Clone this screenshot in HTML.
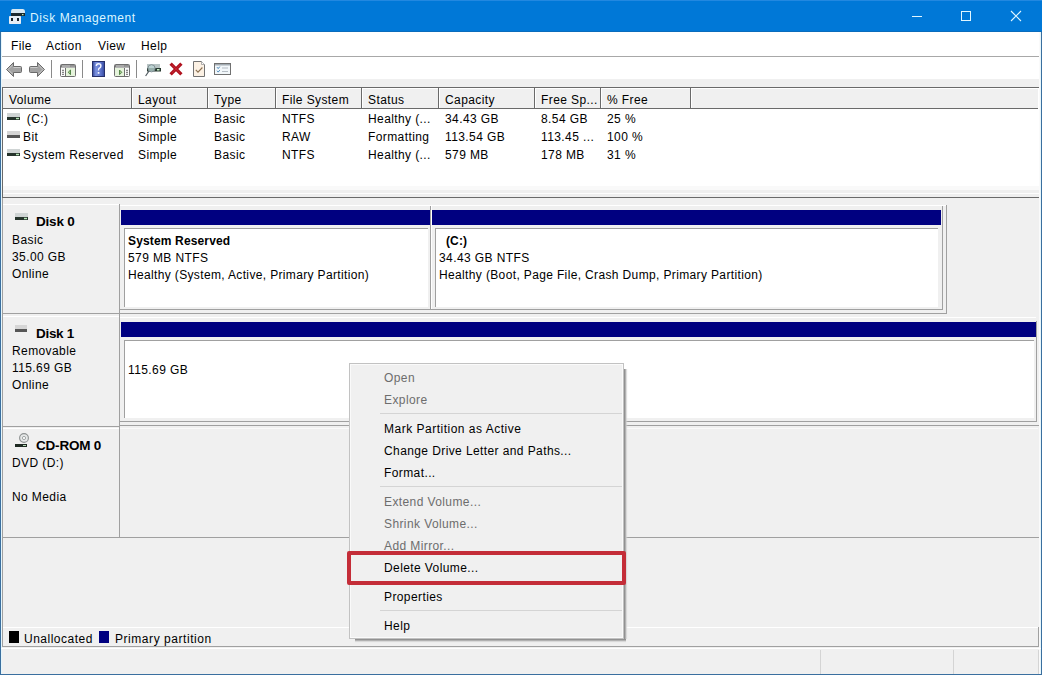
<!DOCTYPE html>
<html><head><meta charset="utf-8">
<style>
*{margin:0;padding:0;box-sizing:border-box}
html,body{width:1042px;height:675px;overflow:hidden;background:#f0f0f0}
body{position:relative;font-family:"Liberation Sans",sans-serif;font-size:12px;color:#000}
.a{position:absolute}
.t{position:absolute;white-space:pre;line-height:12px;font-size:12px;letter-spacing:0.4px;color:#000}
.b{font-weight:bold;letter-spacing:0.15px;color:#000}
.g{color:#6d6d6d}
.hl{position:absolute;height:1px}
.vl{position:absolute;width:1px}
svg{position:absolute;overflow:visible}
</style></head><body>
<!-- ========== title bar ========== -->
<div class="a" style="left:0;top:0;width:1042px;height:32px;background:#0078d7"></div>
<div class="hl" style="left:0;top:0;width:1042px;background:#2288e0"></div>
<div class="hl" style="left:0;top:31px;width:1042px;background:#0a6cbc"></div>
<svg style="left:9px;top:9px" width="16" height="15" viewBox="0 0 16 15">
  <path d="M3.5 0 H14 Q16 0 16 2.5 V7 H2 V2.5 Q2 0 3.5 0Z" fill="#d8e8f2"/>
  <rect x="2" y="4" width="14" height="3" fill="#1c2a30"/>
  <rect x="13" y="5" width="1.5" height="1.2" fill="#b8e8b0"/>
  <rect x="0" y="7" width="12" height="8" rx="0.8" fill="#e6eef6"/>
  <rect x="2" y="9" width="2" height="3" fill="#16222c"/>
  <rect x="8" y="9" width="2" height="3" fill="#16222c"/>
</svg>
<div class="t" style="left:30px;top:12px;color:#dcf6ff;letter-spacing:0.6px">Disk Management</div>
<!-- caption buttons -->
<div class="hl" style="left:912px;top:16px;width:10px;background:#e0f6ff"></div>
<div class="a" style="left:961px;top:11px;width:10px;height:10px;border:1px solid #e0f6ff"></div>
<svg style="left:1011px;top:11px" width="10" height="10" viewBox="0 0 10 10"><path d="M0 0L10 10M10 0L0 10" stroke="#e0f6ff" stroke-width="1.1"/></svg>

<!-- window borders -->
<div class="vl" style="left:0;top:32px;height:643px;background:#3a6f9f"></div>
<div class="vl" style="left:1041px;top:32px;height:643px;background:#3a6f9f"></div>
<div class="hl" style="left:0;top:674px;width:1042px;background:#3a6f9f"></div>

<!-- ========== menu bar ========== -->
<div class="a" style="left:1px;top:32px;width:1040px;height:24px;background:#fff"></div>
<div class="hl" style="left:1px;top:56px;width:1040px;background:#a8a8a8"></div>
<div class="t" style="left:11px;top:40px">File</div>
<div class="t" style="left:46px;top:40px">Action</div>
<div class="t" style="left:98px;top:40px">View</div>
<div class="t" style="left:141px;top:40px">Help</div>

<!-- ========== toolbar ========== -->
<div class="a" style="left:1px;top:57px;width:1040px;height:22px;background:#fff"></div>
<!-- back -->
<svg style="left:6px;top:62px" width="16" height="15" viewBox="0 0 16 15">
  <path d="M7.5 0.5 L0.5 7.5 L7.5 14.5 V10.5 H14.5 Q15.5 10.5 15.5 9.5 V5.5 Q15.5 4.5 14.5 4.5 H7.5Z" fill="#a2a2a2" stroke="#6a6a6a" stroke-width="1"/>
  <path d="M6.5 3 L2 7.5 L6.5 12 M7.5 5.5 H14.5" fill="none" stroke="#d4d4d4" stroke-width="0.8"/>
</svg>
<svg style="left:29px;top:62px" width="16" height="15" viewBox="0 0 16 15">
  <path d="M8.5 0.5 L15.5 7.5 L8.5 14.5 V10.5 H1.5 Q0.5 10.5 0.5 9.5 V5.5 Q0.5 4.5 1.5 4.5 H8.5Z" fill="#a2a2a2" stroke="#6a6a6a" stroke-width="1"/>
  <path d="M9.5 3 L14 7.5 L9.5 12 M1.5 5.5 H8.5" fill="none" stroke="#d4d4d4" stroke-width="0.8"/>
</svg>
<div class="vl" style="left:51px;top:60px;height:18px;background:#8a8a8a"></div>
<!-- show/hide console tree -->
<svg style="left:60px;top:64px" width="16" height="13" viewBox="0 0 16 13">
  <rect x="0.5" y="0.5" width="15" height="12" rx="1" fill="#fcfcfc" stroke="#6e6e6e"/>
  <rect x="1" y="1" width="14" height="2" fill="#7a7a7a"/>
  <path d="M2 2H10.5" stroke="#f4f4f4" stroke-width="0.8"/>
  <circle cx="12" cy="2" r="0.6" fill="#f4f4f4"/><circle cx="14" cy="2" r="0.6" fill="#f4f4f4"/>
  <path d="M1 3.5H15" stroke="#b4b4b4"/>
  <rect x="6" y="4" width="9" height="8" fill="#e6f4dc"/>
  <path d="M5.5 4V12" stroke="#6e6e6e"/>
  <path d="M2 6.3H4M2 8.3H4M2 10.3H4" stroke="#6a6a6a"/>
  <path d="M10.5 6 L8.2 8.3 L10.5 10.7 Z" fill="#a6cc90" stroke="#56864a" stroke-width="1"/>
</svg>
<div class="vl" style="left:82px;top:60px;height:18px;background:#8a8a8a"></div>
<!-- help -->
<svg style="left:92px;top:61px" width="13" height="16" viewBox="0 0 13 16">
  <defs><linearGradient id="hg" x1="0" x2="1"><stop offset="0" stop-color="#2a3c8e"/><stop offset="0.3" stop-color="#7d93e0"/><stop offset="0.7" stop-color="#5a70c8"/><stop offset="1" stop-color="#2e4296"/></linearGradient></defs>
  <rect x="0" y="0" width="13" height="16" fill="url(#hg)"/>
  <rect x="0.5" y="0.5" width="12" height="15" fill="none" stroke="#26306a"/>
  <path d="M4.3 5 Q4.3 2.8 6.6 2.8 Q8.9 2.8 8.9 4.9 Q8.9 6.3 7.1 7.3 Q6.5 7.8 6.5 9.5" fill="none" stroke="#f4f6ff" stroke-width="1.4"/>
  <rect x="5.7" y="11" width="1.7" height="1.8" fill="#f4f6ff"/>
</svg>
<!-- show/hide action pane -->
<svg style="left:114px;top:64px" width="16" height="13" viewBox="0 0 16 13">
  <rect x="0.5" y="0.5" width="15" height="12" rx="1" fill="#fcfcfc" stroke="#6e6e6e"/>
  <rect x="1" y="1" width="14" height="2" fill="#7a7a7a"/>
  <path d="M2 2H10.5" stroke="#f4f4f4" stroke-width="0.8"/>
  <circle cx="12" cy="2" r="0.6" fill="#f4f4f4"/><circle cx="14" cy="2" r="0.6" fill="#f4f4f4"/>
  <path d="M1 3.5H15" stroke="#b4b4b4"/>
  <rect x="1" y="4" width="9" height="8" fill="#e6f4dc"/>
  <path d="M10.5 4V12" stroke="#6e6e6e"/>
  <path d="M12 6.3H14M12 8.3H14M12 10.3H14" stroke="#6a6a6a"/>
  <path d="M5.5 6 L7.8 8.3 L5.5 10.7 Z" fill="#a6cc90" stroke="#56864a" stroke-width="1"/>
</svg>
<div class="vl" style="left:136px;top:60px;height:18px;background:#8a8a8a"></div>
<!-- connect virtual disk / magnifier -->
<svg style="left:145px;top:63px" width="16" height="14" viewBox="0 0 16 14">
  <rect x="2" y="1" width="13" height="4" fill="#b8c4c4"/>
  <rect x="2" y="5" width="14" height="3.5" fill="#26382f"/>
  <rect x="12" y="6" width="2.5" height="1.5" fill="#c8f0c8"/>
  <circle cx="6.5" cy="5.3" r="3.6" fill="rgba(190,215,215,0.75)" stroke="#7d8a90" stroke-width="0.9"/>
  <path d="M4 8 L0.6 13" stroke="#505a60" stroke-width="1.2"/>
</svg>
<!-- red X -->
<svg style="left:169px;top:62px" width="14" height="14" viewBox="0 0 14 14">
  <path d="M1.6 1.6 L12.4 12.4 M12.4 1.6 L1.6 12.4" stroke="#b0121e" stroke-width="3.3"/>
  <path d="M3 3 L11 11 M11 3 L3 11" stroke="#d23040" stroke-width="1" opacity="0.6"/>
</svg>
<!-- doc with check -->
<svg style="left:193px;top:61px" width="12" height="16" viewBox="0 0 12 16">
  <path d="M0.5 0.5 H8.5 L11.5 3.5 V15.5 H0.5Z" fill="#fcf1e4" stroke="#727272"/>
  <path d="M8.5 0.5 V3.5 H11.5" fill="#fff" stroke="#9a9a9a" stroke-width="0.8"/>
  <path d="M2.8 8.8 L5 11.2 L9.4 6.5" fill="none" stroke="#8c7050" stroke-width="1.1"/>
</svg>
<!-- checklist window -->
<svg style="left:214px;top:63px" width="17" height="12" viewBox="0 0 17 12">
  <rect x="0.5" y="0.5" width="16" height="11" fill="#f2f7fa" stroke="#707070"/>
  <path d="M1 1.8H16" stroke="#8e98a0" stroke-width="1.2"/>
  <path d="M3 4.2 L4.2 5.6 L5.8 3.6 M3 7.7 L4.2 9.1 L5.8 7.1" fill="none" stroke="#4a86b8" stroke-width="1"/>
  <rect x="8" y="4.5" width="6" height="1" fill="#b4bcc4"/><rect x="8" y="8" width="6" height="1" fill="#b4bcc4"/>
</svg>

<!-- ========== list view ========== -->
<div class="a" style="left:2px;top:87px;width:1037px;height:111px;background:#fff;border-top:1px solid #6a6a6a;border-bottom:1px solid #6a6a6a;border-left:1px solid #6a6a6a"></div>
<div class="a" style="left:3px;top:186px;width:1036px;height:4px;background:#f9f9f9"></div>
<div class="a" style="left:3px;top:190px;width:1036px;height:7px;background:#efefef"></div>
<div class="hl" style="left:3px;top:193px;width:1036px;background:#fdfdfd"></div>
<div class="a" style="left:3px;top:88px;width:1035px;height:21px;background:#f0f0f0;border-top:1px solid #fff;border-bottom:1px solid #6a6a6a"></div>
<!-- header separators -->
<div class="vl" style="left:131px;top:88px;height:20px;background:#6a6a6a"></div><div class="vl" style="left:132px;top:89px;height:19px;background:#fff"></div>
<div class="vl" style="left:207px;top:88px;height:20px;background:#6a6a6a"></div><div class="vl" style="left:208px;top:89px;height:19px;background:#fff"></div>
<div class="vl" style="left:275px;top:88px;height:20px;background:#6a6a6a"></div><div class="vl" style="left:276px;top:89px;height:19px;background:#fff"></div>
<div class="vl" style="left:361px;top:88px;height:20px;background:#6a6a6a"></div><div class="vl" style="left:362px;top:89px;height:19px;background:#fff"></div>
<div class="vl" style="left:438px;top:88px;height:20px;background:#6a6a6a"></div><div class="vl" style="left:439px;top:89px;height:19px;background:#fff"></div>
<div class="vl" style="left:534px;top:88px;height:20px;background:#6a6a6a"></div><div class="vl" style="left:535px;top:89px;height:19px;background:#fff"></div>
<div class="vl" style="left:600px;top:88px;height:20px;background:#6a6a6a"></div><div class="vl" style="left:601px;top:89px;height:19px;background:#fff"></div>
<div class="vl" style="left:690px;top:88px;height:20px;background:#6a6a6a"></div><div class="vl" style="left:691px;top:89px;height:19px;background:#fff"></div>
<div class="t" style="left:9px;top:94px">Volume</div>
<div class="t" style="left:138px;top:94px">Layout</div>
<div class="t" style="left:214px;top:94px">Type</div>
<div class="t" style="left:282px;top:94px">File System</div>
<div class="t" style="left:368px;top:94px">Status</div>
<div class="t" style="left:445px;top:94px">Capacity</div>
<div class="t" style="left:541px;top:94px">Free Sp...</div>
<div class="t" style="left:607px;top:94px">% Free</div>

<!-- rows -->
<svg style="left:7px;top:113px" width="13" height="7" viewBox="0 0 13 7">
  <rect x="0" y="0" width="13" height="4" fill="#cfd4d4"/><rect x="0" y="4" width="13" height="3" fill="#26342c"/><rect x="9" y="4.8" width="3" height="1.4" fill="#b8e8b8"/>
</svg>
<svg style="left:7px;top:131px" width="13" height="7" viewBox="0 0 13 7">
  <rect x="0" y="0" width="13" height="4" fill="#d6d6d6"/><rect x="0" y="4" width="13" height="3" fill="#565656"/>
</svg>
<svg style="left:7px;top:149px" width="13" height="7" viewBox="0 0 13 7">
  <rect x="0" y="0" width="13" height="4" fill="#cfd4d4"/><rect x="0" y="4" width="13" height="3" fill="#26342c"/><rect x="9" y="4.8" width="3" height="1.4" fill="#b8e8b8"/>
</svg>
<div class="t" style="left:23px;top:113px"> (C:)</div>
<div class="t" style="left:23px;top:131px">Bit</div>
<div class="t" style="left:23px;top:149px">System Reserved</div>
<div class="t" style="left:138px;top:113px">Simple</div>
<div class="t" style="left:138px;top:131px">Simple</div>
<div class="t" style="left:138px;top:149px">Simple</div>
<div class="t" style="left:214px;top:113px">Basic</div>
<div class="t" style="left:214px;top:131px">Basic</div>
<div class="t" style="left:214px;top:149px">Basic</div>
<div class="t" style="left:282px;top:113px">NTFS</div>
<div class="t" style="left:282px;top:131px">RAW</div>
<div class="t" style="left:282px;top:149px">NTFS</div>
<div class="t" style="left:368px;top:113px">Healthy (...</div>
<div class="t" style="left:368px;top:131px">Formatting</div>
<div class="t" style="left:368px;top:149px">Healthy (...</div>
<div class="t" style="left:445px;top:113px">34.43 GB</div>
<div class="t" style="left:445px;top:131px">113.54 GB</div>
<div class="t" style="left:445px;top:149px">579 MB</div>
<div class="t" style="left:541px;top:113px">8.54 GB</div>
<div class="t" style="left:541px;top:131px">113.45 ...</div>
<div class="t" style="left:541px;top:149px">178 MB</div>
<div class="t" style="left:607px;top:113px">25 %</div>
<div class="t" style="left:607px;top:131px">100 %</div>
<div class="t" style="left:607px;top:149px">31 %</div>

<!-- ========== graphical view ========== -->
<!-- outer frame right border -->
<div class="vl" style="left:1038px;top:627px;height:20px;background:#a0a0a0"></div><div class="vl" style="left:1039px;top:32px;height:642px;background:#fafafa"></div><div class="vl" style="left:1040px;top:32px;height:642px;background:#e6f6fc"></div><div class="vl" style="left:1px;top:32px;height:642px;background:#e6f6fc"></div>
<div class="vl" style="left:2px;top:198px;height:449px;background:#a0a0a0"></div>

<!-- Disk 0 -->
<div class="hl" style="left:3px;top:204px;width:116px;background:#fff"></div>
<div class="vl" style="left:119px;top:204px;height:110px;background:#a0a0a0"></div>
<div class="hl" style="left:3px;top:313px;width:944px;background:#a0a0a0"></div>
<div class="hl" style="left:120px;top:205px;width:826px;background:#fff"></div>
<div class="vl" style="left:946px;top:205px;height:109px;background:#a0a0a0"></div>
<svg style="left:15px;top:213px" width="13" height="7" viewBox="0 0 13 7">
  <rect x="0" y="0" width="13" height="4" fill="#cfd4d4"/><rect x="0" y="4" width="13" height="3" fill="#26342c"/><rect x="9" y="4.8" width="3" height="1.4" fill="#b8e8b8"/>
</svg>
<div class="t b" style="left:36px;top:215px;font-size:13.5px;line-height:13px;letter-spacing:-0.2px">Disk 0</div>
<div class="t" style="left:12px;top:234px">Basic</div>
<div class="t" style="left:12px;top:251px">35.00 GB</div>
<div class="t" style="left:12px;top:268px">Online</div>

<!-- partition 1 -->
<div class="vl" style="left:430px;top:206px;height:104px;background:#a0a0a0"></div>
<div class="hl" style="left:120px;top:309px;width:311px;background:#a0a0a0"></div>
<div class="a" style="left:121px;top:210px;width:309px;height:15px;background:#000080"></div>
<div class="a" style="left:124px;top:228px;width:304px;height:79px;background:#fff;border-left:1px solid #a0a0a0;border-top:1px solid #a0a0a0"></div>
<div class="t b" style="left:128px;top:235px">System Reserved</div>
<div class="t" style="left:128px;top:252px">579 MB NTFS</div>
<div class="t" style="left:128px;top:269px;letter-spacing:0.35px">Healthy (System, Active, Primary Partition)</div>
<!-- partition 2 -->
<div class="hl" style="left:431px;top:205px;width:511px;background:#fff"></div>
<div class="vl" style="left:431px;top:206px;height:103px;background:#fff"></div>
<div class="vl" style="left:942px;top:206px;height:104px;background:#a0a0a0"></div>
<div class="hl" style="left:431px;top:309px;width:512px;background:#a0a0a0"></div>
<div class="a" style="left:432px;top:210px;width:509px;height:15px;background:#000080"></div>
<div class="a" style="left:435px;top:228px;width:503px;height:79px;background:#fff;border-left:1px solid #a0a0a0;border-top:1px solid #a0a0a0"></div>
<div class="t b" style="left:439px;top:235px">  (C:)</div>
<div class="t" style="left:439px;top:252px">34.43 GB NTFS</div>
<div class="t" style="left:439px;top:269px;letter-spacing:0.36px">Healthy (Boot, Page File, Crash Dump, Primary Partition)</div>

<!-- Disk 1 -->
<div class="hl" style="left:3px;top:316px;width:116px;background:#fff"></div>
<div class="vl" style="left:119px;top:314px;height:112px;background:#a0a0a0"></div>
<div class="hl" style="left:3px;top:426px;width:117px;background:#a0a0a0"></div><div class="hl" style="left:120px;top:425px;width:919px;background:#a0a0a0"></div>
<div class="hl" style="left:120px;top:317px;width:916px;background:#fff"></div>
<svg style="left:15px;top:325px" width="12" height="7" viewBox="0 0 12 7">
  <rect x="0" y="0" width="12" height="4" fill="#d6d6d6"/><rect x="0" y="4" width="12" height="3" fill="#565656"/>
</svg>
<div class="t b" style="left:36px;top:327px;font-size:13.5px;line-height:13px;letter-spacing:-0.3px">Disk 1</div>
<div class="t" style="left:12px;top:345px">Removable</div>
<div class="t" style="left:12px;top:362px">115.69 GB</div>
<div class="t" style="left:12px;top:379px">Online</div>
<div class="a" style="left:121px;top:322px;width:915px;height:15px;background:#000080"></div>
<div class="a" style="left:124px;top:340px;width:910px;height:78px;background:#fff;border-left:1px solid #a0a0a0;border-top:1px solid #a0a0a0"></div>
<div class="hl" style="left:120px;top:421px;width:917px;background:#a0a0a0"></div>
<div class="vl" style="left:1036px;top:321px;height:101px;background:#a0a0a0"></div>
<div class="t" style="left:128px;top:364px">115.69 GB</div>

<!-- CD-ROM 0 -->
<div class="hl" style="left:3px;top:428px;width:116px;background:#fff"></div>
<div class="hl" style="left:120px;top:428px;width:918px;background:#fafafa"></div>
<div class="vl" style="left:119px;top:426px;height:112px;background:#a0a0a0"></div>
<div class="hl" style="left:3px;top:537px;width:1036px;background:#a0a0a0"></div>
<svg style="left:14px;top:432px" width="14" height="16" viewBox="0 0 14 16">
  <circle cx="10" cy="6" r="4.4" fill="#e6e8e8" stroke="#8e9292" stroke-width="1.1"/>
  <circle cx="10" cy="6" r="1.6" fill="#fff" stroke="#9a9e9e" stroke-width="0.9"/>
  <rect x="1" y="12" width="12" height="3" fill="#1e2a22"/><path d="M9 13.5h3" stroke="#c8f0c8" stroke-width="0.9"/>
</svg>
<div class="t b" style="left:36px;top:439px;font-size:13.5px;line-height:13px;letter-spacing:-0.2px">CD-ROM 0</div>
<div class="t" style="left:12px;top:457px">DVD (D:)</div>
<div class="t" style="left:12px;top:491px">No Media</div>

<!-- legend -->
<div class="hl" style="left:3px;top:627px;width:1035px;background:#fff"></div>
<div class="hl" style="left:2px;top:646px;width:1037px;background:#a0a0a0"></div>
<div class="a" style="left:9px;top:631px;width:10px;height:12px;background:#000"></div>
<div class="t" style="left:24px;top:633px;letter-spacing:0.5px">Unallocated</div>
<div class="a" style="left:99px;top:631px;width:10px;height:12px;background:#000080"></div>
<div class="t" style="left:115px;top:633px;letter-spacing:0.55px">Primary partition</div>

<!-- status bar -->
<div class="hl" style="left:1px;top:648px;width:1040px;background:#fff"></div>
<div class="vl" style="left:820px;top:650px;height:24px;background:#d4d4d4"></div>
<div class="vl" style="left:953px;top:650px;height:24px;background:#d4d4d4"></div><div class="vl" style="left:1038px;top:650px;height:24px;background:#d4d4d4"></div>

<!-- ========== context menu ========== -->

<div class="a" style="left:624px;top:369px;width:4px;height:270px;background:linear-gradient(to right,#888 0,#9a9a9a 1px,#c8c8c8 2px,rgba(220,220,220,0.3) 3px,rgba(240,240,240,0) 4px)"></div>
<div class="a" style="left:355px;top:639px;width:271px;height:4px;background:linear-gradient(to bottom,#888 0,#9a9a9a 1px,#c8c8c8 2px,rgba(220,220,220,0.3) 3px,rgba(240,240,240,0) 4px)"></div>
<div class="a" style="left:349px;top:363px;width:275px;height:276px;background:#f0f0f0;border:1px solid #c2c2c2;box-shadow:inset 1px 1px 0 #fafafa,inset -1px -1px 0 #fafafa"></div>
<div class="t g" style="left:384px;top:372px">Open</div>
<div class="t g" style="left:384px;top:394px">Explore</div>
<div class="hl" style="left:380px;top:413px;width:242px;background:#d4d4d4"></div>
<div class="t" style="left:384px;top:423px;letter-spacing:0.5px">Mark Partition as Active</div>
<div class="t" style="left:384px;top:445px">Change Drive Letter and Paths...</div>
<div class="t" style="left:384px;top:467px">Format...</div>
<div class="hl" style="left:380px;top:486px;width:242px;background:#d4d4d4"></div>
<div class="t g" style="left:384px;top:496px">Extend Volume...</div>
<div class="t g" style="left:384px;top:518px">Shrink Volume...</div>
<div class="t g" style="left:384px;top:540px">Add Mirror...</div>
<div class="t" style="left:384px;top:562px">Delete Volume...</div>
<div class="t" style="left:384px;top:591px">Properties</div>
<div class="hl" style="left:380px;top:610px;width:242px;background:#d4d4d4"></div>
<div class="t" style="left:384px;top:620px">Help</div>
<!-- red highlight -->
<div class="a" style="left:347px;top:551px;width:279px;height:34px;border:4px solid #c42d38;border-radius:2px"></div>
</body></html>
